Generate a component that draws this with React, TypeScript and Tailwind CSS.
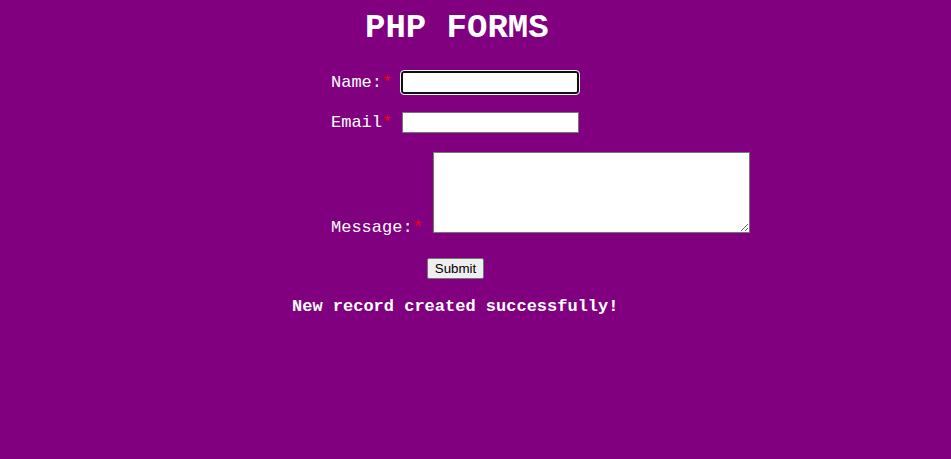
export default function App() {
  return (
    <div className="min-h-screen w-full bg-[#800080] font-['Liberation_Mono','Courier_New',monospace] text-white">
      <h1 className="pl-[365px] pt-[9px] text-[34px] font-bold leading-[38px]">PHP FORMS</h1>
      <form className="flex flex-col">
        <div className="mt-[24px] flex items-center pl-[331px]">
          <label className="text-[17px] leading-[20px]">
            Name:<span className="text-[#ff0000]">*</span>
          </label>
          <input
            type="text"
            className="ml-[9px] h-[23px] w-[178px] rounded-[3px] border-2 border-[#101010] bg-white px-[2px] text-[13px] text-black outline outline-1 outline-white"
            aria-label="Name"
          />
        </div>
        <div className="mt-[18px] flex items-center pl-[331px]">
          <label className="text-[17px] leading-[20px]">
            Email<span className="text-[#ff0000]">*</span>
          </label>
          <input
            type="text"
            className="ml-[10px] h-[21px] w-[177px] border border-[#767676] bg-white px-[2px] text-[13px] text-black"
            aria-label="Email"
          />
        </div>
        <div className="mt-[19px] flex items-end pl-[331px]">
          <label className="mb-[-5px] text-[17px] leading-[20px]">
            Message:<span className="text-[#ff0000]">*</span>
          </label>
          <textarea
            className="ml-[10px] h-[81px] w-[317px] border border-[#767676] bg-white text-[13px] text-black"
            aria-label="Message"
          />
        </div>
        <div className="mt-[24px] pl-[427px]">
          <button
            type="submit"
            className="h-[21px] w-[57px] rounded-[2px] border border-[#767676] bg-[#efefef] font-['Liberation_Sans',Arial,sans-serif] text-[13.33px] text-black"
          >
            Submit
          </button>
        </div>
      </form>
      <p className="mt-[16px] pl-[292px] text-[17px] font-bold leading-[20px]">New record created successfully!</p>
    </div>
  );
}
